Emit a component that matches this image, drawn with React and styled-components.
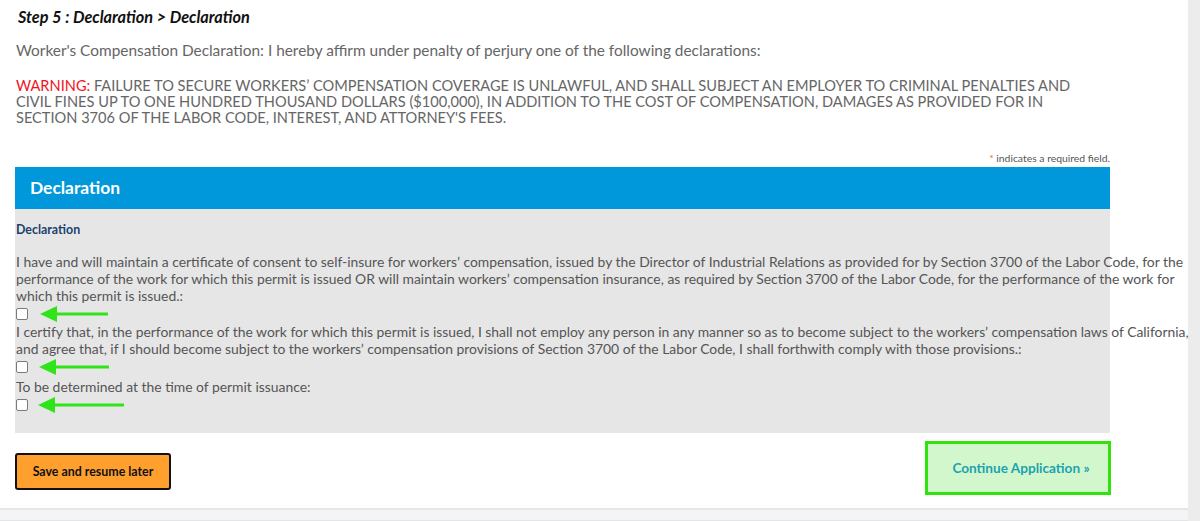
import React from "react";
import styled, { createGlobalStyle } from "styled-components";

const Global = createGlobalStyle`
  html, body { margin: 0; padding: 0; background: #fff; }
  body { font-family: Lato, "Open Sans", Arial, sans-serif; }
  * { box-sizing: border-box; }
`;

const Page = styled.div`
  display: flex;
  width: 1200px;
  height: 521px;
  overflow: hidden;
`;

const Main = styled.div`
  width: 1188px;
  display: flex;
  flex-direction: column;
  background: #fff;
  position: relative;
  z-index: 1;
`;

const Side = styled.div`
  flex: 1;
  background: #ececec;
`;

const Content = styled.div`
  flex: 1;
  padding: 8px 0 0 16px;
  color: #666;
`;

const Title = styled.h1`
  margin: 0 0 0 2px;
  font-size: 16.3px;
  line-height: 18px;
  font-style: italic;
  font-weight: 700;
  color: #111;
`;

const Intro = styled.p`
  margin: 15px 0 0;
  font-size: 15.4px;
  line-height: 18px;
  color: #666;
`;

const Warning = styled.p`
  margin: 19px 0 0;
  font-size: 14.6px;
  line-height: 16px;
  color: #666;
  text-transform: uppercase;
`;

const Red = styled.span`
  color: #f2141c;
`;

const Required = styled.div`
  width: 1094px;
  margin-top: 26px;
  text-align: right;
  font-size: 10.4px;
  line-height: 12px;
  color: #555;
`;

const Star = styled.span`
  color: #e8731a;
`;

const Section = styled.div`
  width: 1095px;
  margin-top: 3px;
  margin-left: -1px;
`;

const SectionHead = styled.div`
  height: 42px;
  background: #0098da;
  color: #fff;
  font-weight: 700;
  font-size: 17.4px;
  display: flex;
  align-items: center;
  padding: 0 0 2px 15px;
`;

const Panel = styled.div`
  background: #e6e6e6;
  padding: 14px 0 20px 0;
  height: 224px;
`;

const Inner = styled.div`
  width: 1180px;
  padding-left: 1px;
  color: #555;
`;

const Label = styled.div`
  font-size: 12.4px;
  font-weight: 700;
  color: #1d3f6e;
  line-height: 14px;
`;

const Para = styled.div`
  font-size: 13.9px;
  line-height: 17px;
  white-space: nowrap;
  margin-top: ${(p) => p.$mt || 0}px;
`;

const CheckRow = styled.div`
  display: flex;
  align-items: center;
  height: ${(p) => p.$h || 19}px;
`;

const Box = styled.input.attrs({ type: "checkbox" })`
  appearance: none;
  -webkit-appearance: none;
  margin: 0;
  width: 12px;
  height: 12px;
  border: 1px solid #7a7a7a;
  border-radius: 2px;
  background: #fff;
`;

const Arrow = styled.svg`
  display: block;
  margin-left: ${(p) => p.$ml}px;
`;

const Actions = styled.div`
  width: 1095px;
  margin-left: -1px;
  display: flex;
  justify-content: space-between;
  align-items: flex-start;
  padding-top: 8px;
`;

const SaveBtn = styled.button`
  margin-top: 12px;
  width: 156px;
  height: 37px;
  background: #ff9f2e;
  border: 2px solid #111;
  border-radius: 3px;
  font-family: inherit;
  font-size: 12.4px;
  font-weight: 700;
  color: #111;
  padding: 0;
`;

const ContinueBtn = styled.button`
  width: 186px;
  height: 54px;
  margin-right: -1px;
  background: #d3f7cd;
  border: 3px solid #2ee40c;
  font-family: inherit;
  font-size: 13.6px;
  font-weight: 700;
  color: #1ba3ae;
  padding: 0 0 0 6px;
`;

const Footer = styled.div`
  height: 13px;
  border-top: 2px solid #e6e6e6;
  border-bottom: 1px solid #e2e6e6;
  background: #f4f4f4;
`;

function GreenArrow({ len, ml }) {
  const w = len;
  return (
    <Arrow $ml={ml} width={w} height="18" viewBox={`0 0 ${w} 18`}>
      <line x1="12" y1="9" x2={w} y2="9" stroke="#2fe419" strokeWidth="3" />
      <polygon points="0,9 17,1 17,17" fill="#2fe419" />
    </Arrow>
  );
}

export default function App() {
  return (
    <>
      <Global />
      <Page>
        <Main>
          <Content>
            <Title>Step 5 : Declaration &gt; Declaration</Title>
            <Intro>
              Worker's Compensation Declaration: I hereby affirm under penalty of perjury one of the following declarations:
            </Intro>
            <Warning>
              <Red>Warning:</Red> Failure to secure workers’ compensation coverage is unlawful, and shall subject an employer to criminal penalties and
              <br />
              civil fines up to one hundred thousand dollars ($100,000), in addition to the cost of compensation, damages as provided for in
              <br />
              Section 3706 of the Labor Code, interest, and attorney's fees.
            </Warning>
            <Required>
              <Star>*</Star> indicates a required field.
            </Required>
            <Section>
              <SectionHead>Declaration</SectionHead>
              <Panel>
                <Inner>
                  <Label>Declaration</Label>
                  <Para $mt={16}>
                    I have and will maintain a certificate of consent to self-insure for workers’ compensation, issued by the Director of Industrial Relations as provided for by Section 3700 of the Labor Code, for the
                    <br />
                    performance of the work for which this permit is issued OR will maintain workers’ compensation insurance, as required by Section 3700 of the Labor Code, for the performance of the work for
                    <br />
                    which this permit is issued.:
                  </Para>
                  <CheckRow>
                    <Box />
                    <GreenArrow len={68} ml={12} />
                  </CheckRow>
                  <Para>
                    I certify that, in the performance of the work for which this permit is issued, I shall not employ any person in any manner so as to become subject to the workers’ compensation laws of California,
                    <br />
                    and agree that, if I should become subject to the workers’ compensation provisions of Section 3700 of the Labor Code, I shall forthwith comply with those provisions.:
                  </Para>
                  <CheckRow>
                    <Box />
                    <GreenArrow len={70} ml={11} />
                  </CheckRow>
                  <Para $mt={2}>To be determined at the time of permit issuance:</Para>
                  <CheckRow $h={20}>
                    <Box />
                    <GreenArrow len={86} ml={10} />
                  </CheckRow>
                </Inner>
              </Panel>
            </Section>
            <Actions>
              <SaveBtn>Save and resume later</SaveBtn>
              <ContinueBtn>Continue Application »</ContinueBtn>
            </Actions>
          </Content>
          <Footer />
        </Main>
        <Side />
      </Page>
    </>
  );
}
